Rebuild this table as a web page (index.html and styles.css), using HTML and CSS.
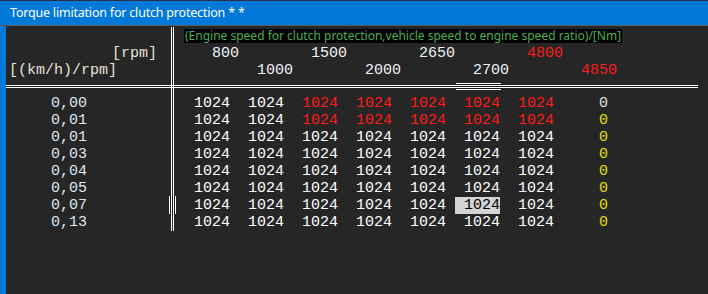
FILE: index.html
```html
<!DOCTYPE html>
<html>
<head>
<meta charset="utf-8">
<link rel="stylesheet" href="styles.css">
</head>
<body>
<div class="win">
  <div class="topstrip"></div>
  <div class="titlebar">Torque limitation for clutch protection * *</div>
  <div class="main">
    <div class="edge"></div>
    <div class="table">
      <div class="row caption">
        <div class="lbl"></div>
        <div class="vdiv"></div>
        <div class="capcell"><span class="captext">(Engine speed for clutch protection,vehicle speed to engine speed ratio)/[Nm]</span></div>
      </div>
      <div class="row head">
        <div class="lbl unit-r">[rpm]</div>
        <div class="vdiv"></div>
        <div class="cells hcells">
          <span>800</span><span></span><span>1500</span><span></span><span>2650</span><span></span><span class="red">4800</span><span></span>
        </div>
      </div>
      <div class="row head">
        <div class="lbl unit-l">[(km/h)/rpm]</div>
        <div class="vdiv"></div>
        <div class="cells hcells">
          <span></span><span>1000</span><span></span><span>2000</span><span></span><span>2700</span><span></span><span class="red">4850</span>
        </div>
      </div>
      <div class="hrule">
        <div class="hl"></div>
        <div class="hl hv"></div>
        <div class="hl"></div>
        <div class="hl hsel"></div>
        <div class="hl"></div>
      </div>
      <div class="row data">
        <div class="lbl val">0,00</div><div class="vdiv"></div>
        <div class="cells"><span>1024</span><span>1024</span><span class="red">1024</span><span class="red">1024</span><span class="red">1024</span><span class="red">1024</span><span class="red">1024</span><span class="zero">0</span></div>
      </div>
      <div class="row data">
        <div class="lbl val">0,01</div><div class="vdiv"></div>
        <div class="cells"><span>1024</span><span>1024</span><span class="red">1024</span><span class="red">1024</span><span class="red">1024</span><span class="red">1024</span><span class="red">1024</span><span class="yel">0</span></div>
      </div>
      <div class="row data">
        <div class="lbl val">0,01</div><div class="vdiv"></div>
        <div class="cells"><span>1024</span><span>1024</span><span>1024</span><span>1024</span><span>1024</span><span>1024</span><span>1024</span><span class="yel">0</span></div>
      </div>
      <div class="row data">
        <div class="lbl val">0,03</div><div class="vdiv"></div>
        <div class="cells"><span>1024</span><span>1024</span><span>1024</span><span>1024</span><span>1024</span><span>1024</span><span>1024</span><span class="yel">0</span></div>
      </div>
      <div class="row data">
        <div class="lbl val">0,04</div><div class="vdiv"></div>
        <div class="cells"><span>1024</span><span>1024</span><span>1024</span><span>1024</span><span>1024</span><span>1024</span><span>1024</span><span class="yel">0</span></div>
      </div>
      <div class="row data">
        <div class="lbl val">0,05</div><div class="vdiv"></div>
        <div class="cells"><span>1024</span><span>1024</span><span>1024</span><span>1024</span><span>1024</span><span>1024</span><span>1024</span><span class="yel">0</span></div>
      </div>
      <div class="row data">
        <div class="lbl val">0,07</div><div class="vdiv vsel"></div>
        <div class="cells"><span>1024</span><span>1024</span><span>1024</span><span>1024</span><span>1024</span><span><b class="selcell">1024</b></span><span>1024</span><span class="yel">0</span></div>
      </div>
      <div class="row data">
        <div class="lbl val">0,13</div><div class="vdiv"></div>
        <div class="cells"><span>1024</span><span>1024</span><span>1024</span><span>1024</span><span>1024</span><span>1024</span><span>1024</span><span class="yel">0</span></div>
      </div>
    </div>
  </div>
</div>
</body>
</html>
```
FILE: styles.css
```css
html, body {
  margin: 0;
  padding: 0;
  background: #262626;
  overflow: hidden;
}
.win {
  width: 708px;
  height: 294px;
  background: #262626;
  display: flex;
  flex-direction: column;
}
.topstrip {
  height: 1px;
  background: #2e2e4c;
}
.titlebar {
  height: 24px;
  line-height: 24px;
  background: #0078d7;
  border-bottom: 1px solid #5c5c5c;
  color: #ffffff;
  font-family: "Noto Sans", "Open Sans", sans-serif;
  font-size: 12.5px;
  letter-spacing: -0.2px;
  padding-left: 10px;
  white-space: nowrap;
}
.main {
  flex: 1;
  display: flex;
}
.edge {
  width: 6px;
  background: #0078d7;
}
.table {
  width: 692px;
  font-family: "Liberation Mono", "DejaVu Sans Mono", monospace;
  font-size: 15px;
}
.row {
  display: grid;
  grid-template-columns: 165px 3px 1fr;
  height: 17px;
  line-height: 17px;
}
.row.caption {
  height: 19px;
}
.row.head {
  line-height: 18px;
}
.vdiv {
  box-sizing: border-box;
  width: 3px;
  border-left: 1px solid #ffffff;
  border-right: 1px solid #ffffff;
}
.caption .vdiv {
  margin-top: 1px;
}
.vdiv.vsel {
  width: 7px;
  margin: -1px 0 0 -2px;
  border: none;
  background: repeating-linear-gradient(to right, #ffffff 0 1px, #1a1a1a 1px 2px);
}
.capcell {
  padding-left: 10px;
  padding-top: 2px;
}
.captext {
  display: inline-block;
  background: #000000;
  color: #4caf50;
  font-family: "Noto Sans", "Open Sans", sans-serif;
  font-size: 12px;
  height: 14px;
  line-height: 14px;
  padding: 0 1px;
  white-space: nowrap;
}
.lbl {
  color: #e6e2d6;
  white-space: nowrap;
}
.unit-r {
  text-align: right;
  padding-right: 14px;
}
.unit-l {
  padding-left: 3px;
}
.lbl.val {
  padding-left: 45px;
  color: #dfe7ef;
}
.cells {
  display: grid;
  grid-template-columns: repeat(8, 54px);
  padding-left: 2px;
  color: #ffffff;
}
.cells span {
  text-align: right;
  white-space: nowrap;
}
.hcells {
  padding-left: 11px;
  color: #eef2f6;
}
.red {
  color: #ff1a1a;
}
.hcells .red {
  color: #ff1a1a;
}
.zero {
  color: #e2e2e2;
}
.yel {
  color: #e0e000;
}
.selcell {
  display: inline-block;
  font-weight: normal;
  background: #d4d4d4;
  color: #000000;
  padding-left: 9px;
}
.hrule {
  display: grid;
  grid-template-columns: 165px 3px 282px 45px 1fr;
  height: 16px;
}
.hl {
  background:
    linear-gradient(#ffffff, #ffffff) 0 6px / 100% 1px no-repeat,
    linear-gradient(#ffffff, #ffffff) 0 8px / 100% 1px no-repeat;
}
.hl.hv {
  box-sizing: border-box;
  border-left: 1px solid #ffffff;
  border-right: 1px solid #ffffff;
}
.hl.hsel {
  background: repeating-linear-gradient(to bottom, #ffffff 0 1px, #1a1a1a 1px 2px) 0 4px / 100% 7px no-repeat;
}
```
